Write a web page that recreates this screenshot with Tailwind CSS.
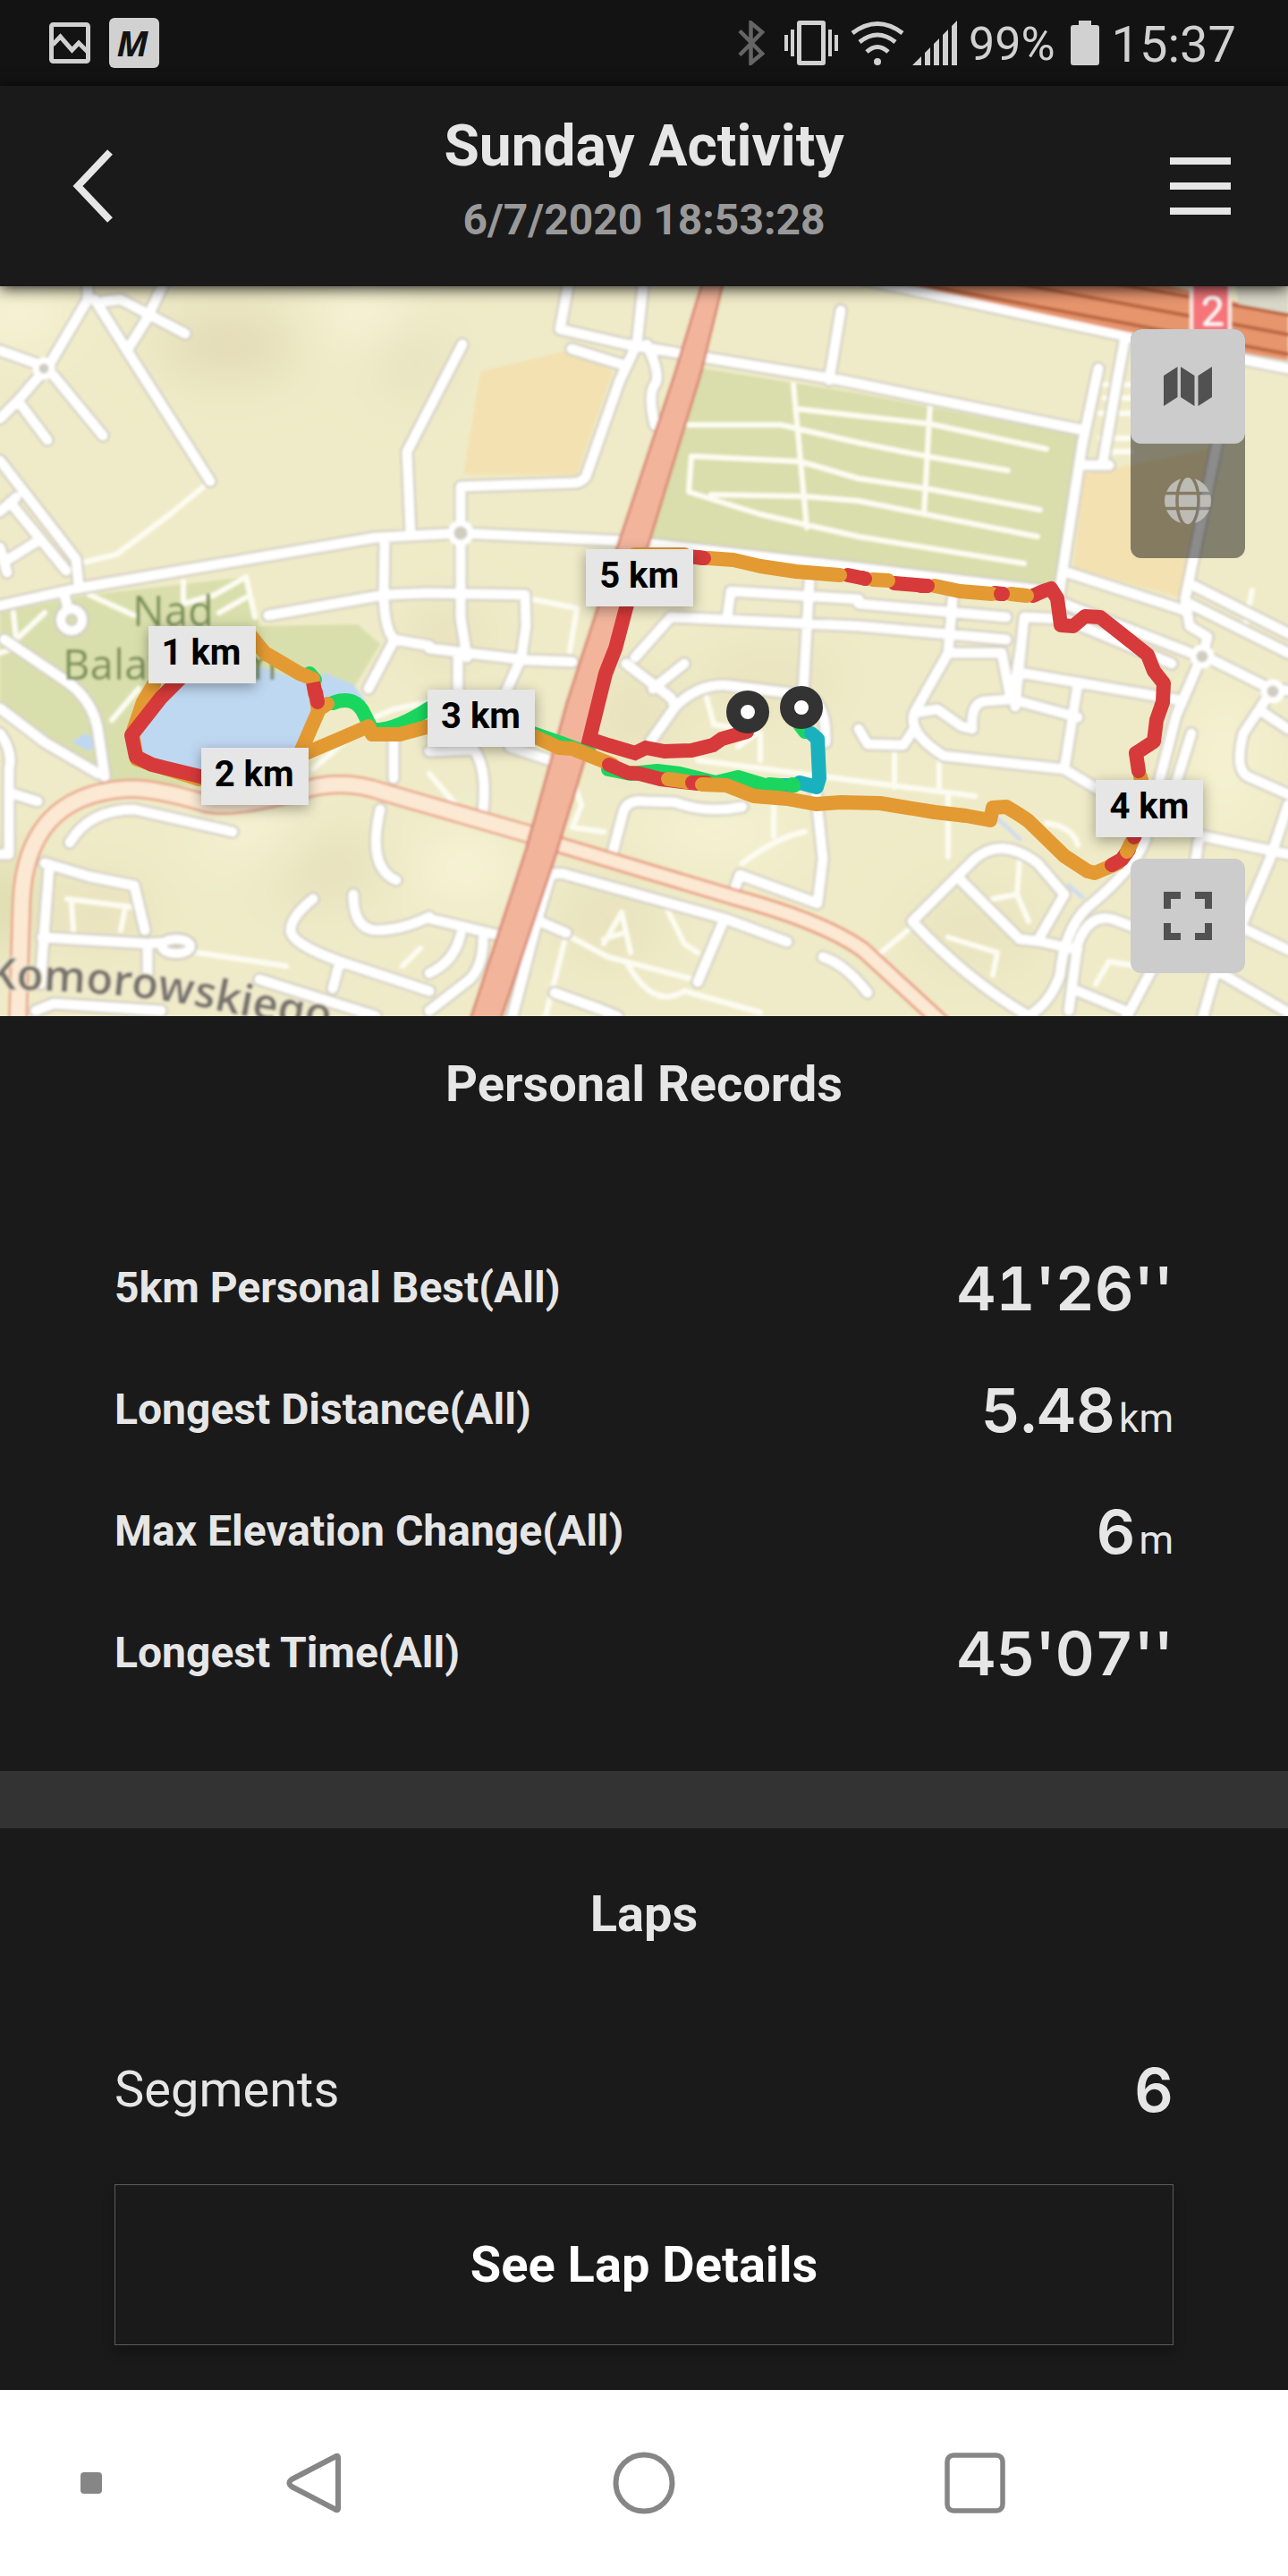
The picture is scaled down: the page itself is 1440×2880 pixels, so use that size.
<!DOCTYPE html>
<html lang="en">
<head>
<meta charset="utf-8">
<meta name="viewport" content="width=device-width, initial-scale=1">
<title>Sunday Activity</title>
<script src="https://cdn.jsdelivr.net/npm/@tailwindcss/browser@4"></script>
</head>
<body class="bg-[#1a1a1a] font-['Roboto',sans-serif] text-[#e6e6e6]">
<div class="flex min-h-screen flex-col">

  <!-- Status bar -->
  <div class="flex h-24 items-center justify-between bg-[#131313] pl-[55px] pr-[58px] text-[#d1d1d1]">
    <div class="flex items-center gap-[21px]">
      <svg class="size-[46px]" viewBox="0 0 46 46" fill="none" stroke="currentColor"><rect x="2.5" y="2.5" width="41" height="41" rx="2" stroke-width="5"/><path d="M4 25 12.500 16 25.500 31 33 23 43 33" stroke-width="5"/></svg>
      <span class="flex size-14 items-center justify-center rounded-md bg-[#d1d1d1] pr-1 font-['Open_Sans',sans-serif] text-[40px] leading-none font-bold italic text-[#131313]">M</span>
    </div>
    <div class="flex items-center">
      <svg class="mr-[22px] h-[50px] w-[30px]" viewBox="0 0 30 50" fill="none" stroke="#656565" stroke-width="4.500"><path d="M2 11.500 27 37 14.500 47.500V2.500L27 13 2 38.500"/></svg>
      <svg class="mr-[14px] h-[50px] w-[60px]" viewBox="0 0 60 50" fill="currentColor"><path fill-rule="evenodd" d="M17 0h26q3 0 3 3v44q0 3-3 3H17q-3 0-3-3V3q0-3 3-3Zm2 5v40h22V5Z"/><path d="M0 16h4v18H0zM7 10h4v30H7zM49 10h4v30h-4zM56 16h4v18h-4z"/></svg>
      <svg class="mr-[9px] h-[50px] w-[60px]" viewBox="0 0 60 50" fill="none" stroke="currentColor" stroke-width="5"><path d="M2 14Q30-7 58 14M10 24Q30 8 50 24M18 35Q30 24 42 35"/><circle cx="30" cy="46" r="4" fill="currentColor" stroke="none"/></svg>
      <svg class="mr-[13px] h-[50px] w-[50px]" viewBox="0 0 50 50" fill="currentColor"><path d="M0 50 10 40v10zM14 36l6-6v20h-6zM24 26l6-6v30h-6zM34 16l6-6v40h-6zM44 6l6-6v50h-6z"/></svg>
      <span class="mr-[17px] pt-1 text-[52px] leading-none">99%</span>
      <svg class="mr-[14px] h-[50px] w-8" viewBox="0 0 32 50" fill="currentColor"><path d="M9 0h14v5h6q3 0 3 3v39q0 3-3 3H3q-3 0-3-3V8q0-3 3-3h6z"/></svg>
      <span class="pt-1 text-[56px] leading-none">15:37</span>
    </div>
  </div>

  <!-- Title bar -->
  <header class="relative z-10 flex h-56 justify-between bg-[#1a1a1a] px-16 shadow-[0_2px_16px_rgba(0,0,0,0.9)]">
    <button type="button" aria-label="Back" class="flex w-[68px] items-center justify-end pr-1.5">
      <svg class="h-[84px] w-12" viewBox="0 0 48 84" fill="none" stroke="#e6e6e6" stroke-width="8"><path d="M45 4 9 42l36 38"/></svg>
    </button>
    <div class="flex flex-col items-center gap-3.5 pt-8 text-center font-bold">
      <h1 class="text-[64px] leading-[72px]">Sunday Activity</h1>
      <p class="text-[48px] leading-[64px] text-[#999]">6/7/2020 18:53:28</p>
    </div>
    <button type="button" aria-label="Menu" class="flex w-[68px] flex-col justify-center gap-5">
      <span class="h-2 bg-[#e6e6e6]"></span><span class="h-2 bg-[#e6e6e6]"></span><span class="h-2 bg-[#e6e6e6]"></span>
    </button>
  </header>

  <!-- Route map -->
  <section aria-label="Route map" class="relative overflow-hidden bg-[#efebc8]">
    <svg class="block w-full" viewBox="0 320 1440 816" fill="none" stroke-linecap="round" stroke-linejoin="round">
      <defs>
        <filter id="soft" x="0" y="0" width="100%" height="100%"><feGaussianBlur stdDeviation="1.6"/></filter>
        <filter id="haze" x="-50%" y="-50%" width="200%" height="200%"><feGaussianBlur stdDeviation="30"/></filter>
        <path id="streets" d="M98 310V335L55 408M0 392 45 408M46 418 20 448 0 468M20 448 53 492M60 420 115 487M106 335 142 392 235 538M116 337 135 335 207 373M186 310 165 355 142 392M0 515 85 625 88 655M0 572 18 556M14 565 74 638M5 628 42 605M0 612 8 640M0 677 85 658 290 623 420 601 515 596 700 605 960 635 1180 662M72 665 76 680M517 385 455 505 459 597M430 605 429 663M300 688 430 665 480 663 587 665 588 700 583 735M637 310 626 368 700 385 940 425 1207 480M720 310 712 385 693 425 655 533Q650 540 640 540L515 544V690L522 735M639 390 697 408M723 385Q740 420 732 430T732 475M940 347 927 425M965 312 1264 377 1440 412M1258 377 1250 420 1233 517M1228 412 1210 497 1187 645 1183 673M1210 520H1240M1193 640 1323 682M1362 490 1325 670 1330 700 1350 712 1344 735M1335 655 1440 708M1330 675 1440 730M1190 675 1344 735M1135 790 1145 690 1190 692 1310 742M960 675 1125 690M960 700 1125 715M1065 670 1060 730M813 690 817 661 960 670M905 650 898 775M710 735 750 690 960 700M700 742 750 780 755 790 728 828M730 770 765 742M755 790Q780 765 810 766L900 777Q925 785 923 830M480 725 590 738 640 740M512 735V778M583 735 565 775M480 840 530 838Q545 860 540 907M570 835 615 850M685 953 697 907Q702 893 722 896L755 897Q790 910 830 902M912 885 920 960 914 1010 827 978 820 998M573 1136 603 1020 615 980Q620 975 630 977L810 1027 880 1053M810 1027 780 1098M603 1030 633 1043M480 1027 555 1045M515 1045Q508 1075 480 1088M540 1050Q540 1080 525 1095L480 1130M620 1110 670 1128 690 1136M920 1070Q945 1078 970 1110M5 715 67 757Q105 780 110 820L117 868M0 792 50 830 110 865M0 820Q15 840 10 860V955H0M10 886 42 896M78 942Q100 905 150 905L260 930M50 965 100 980 150 990 162 1040M55 970 45 1100M47 1048 165 1055 180 1054M165 1055V1090M290 1095 420 1136M40 1130 60 1122 180 1130M425 905Q410 970 443 984M350 1005Q325 1025 325 1040T380 1075L480 1108M395 1000Q395 1040 422 1040T480 1025M380 1075 372 1105M441 715 412 770M429 665Q430 705 441 715L480 722M440 815V870M1060 730 1022 797Q1015 820 1055 845L1190 860 1240 890M1060 730H1120L1130 782 1100 784Q1085 787 1087 815L1075 812 1048 793 1022 797M1022 815 1010 833 970 832 960 815M1142 720 1132 782 1205 802M1140 752 1315 782M1205 765 1190 860M1343 735 1315 800 1297 870 1280 940Q1265 975 1215 1015 1190 1040 1185 1090 1175 1120 1150 1136M1332 820 1315 875M1350 735 1420 770 1440 772M1420 775 1390 820Q1380 860 1395 868L1440 888M1410 795 1440 815M1345 935 1440 955M1440 900 1420 960 1390 1030M1340 940 1335 975M1390 1038 1440 1062M1020 1030 1090 960Q1120 935 1160 965L1190 1000 1160 1052 1140 1050 1070 980M1160 1052 1205 1062M1020 1030Q1080 1095 1150 1136M1195 1130 1205 1055Q1218 1020 1245 1028L1290 1045M1205 1108 1258 1130M1290 1080 1260 1136M1358 1090 1345 1136M1360 1085 1440 1132"/>
        <path id="paths" d="M235 538 190 575 130 620 88 630M0 730 15 725M100 665 150 688M205 650V675L240 665 275 645 285 690M245 685 275 668M15 685 18 715 50 685M595 670 645 680 637 728M1235 430H1270M1235 445H1270M1230 462H1268M1230 490H1266M1230 505H1264M890 457 960 465 1040 474 1170 502M770 475H873L960 495 1035 510 1127 526M773 510 895 516 960 535 1040 547 1163 570M795 553 900 555 960 560 1160 600M773 510 770 550 850 575 960 600 1145 630M887 430 902 590M1040 450 1033 575M125 805 155 770M75 1005 155 1015M80 1010 82 1040M140 1015 135 1040M220 1065 320 1080M640 870 650 900 640 925 675 930M695 1020 675 1055M695 1020 705 1065M675 1050 700 1042M633 1045 680 1070 775 1095M633 1045 610 1136M700 1075Q730 1130 765 1108L850 1132M745 1015 765 1055 780 1065M480 865 510 900M830 965Q870 935 900 930M865 895V935M790 780 798 810 845 818M850 820V850M825 835 845 820M780 850 1090 890M1000 840V880M1050 850V880M1060 890V958M1170 920Q1200 925 1205 945M1140 960 1137 1000 1150 1030M1110 1005 1137 1000M1060 1048 1115 1065 1110 1090M985 1065 1015 1040M1225 1100 1240 1075 1270 1080M450 1080 470 1060M350 860 412 805 440 793 480 785M1400 660 1392 700"/>
      </defs>

      <g filter="url(#soft)">
        <rect y="310" width="1440" height="836" fill="#efebc8"/>
        <!-- terrain shading -->
        <g filter="url(#haze)">
          <ellipse cx="255" cy="385" rx="80" ry="35" fill="#e1d9b4"/><ellipse cx="460" cy="400" rx="35" ry="35" fill="#e2dcb8"/>
          <ellipse cx="410" cy="350" rx="60" ry="30" fill="#f8f5d8"/><ellipse cx="20" cy="350" rx="60" ry="30" fill="#f8f5d8"/>
          <ellipse cx="360" cy="970" rx="70" ry="40" fill="#e6e0bb"/><ellipse cx="280" cy="930" rx="60" ry="30" fill="#f7f4d6"/>
          <ellipse cx="860" cy="760" rx="80" ry="30" fill="#e8e1bc"/><ellipse cx="710" cy="800" rx="40" ry="50" fill="#e6dfba"/>
          <ellipse cx="800" cy="930" rx="90" ry="30" fill="#f6f3d4"/><ellipse cx="520" cy="970" rx="60" ry="40" fill="#f7f4d6"/>
          <ellipse cx="680" cy="1030" rx="60" ry="50" fill="#e8e2bd"/><ellipse cx="500" cy="710" rx="40" ry="30" fill="#e4deb8"/>
          <ellipse cx="1370" cy="850" rx="40" ry="80" fill="#f6f3d2"/><ellipse cx="1090" cy="1040" rx="80" ry="50" fill="#e9e4bf"/>
          <ellipse cx="0" cy="1010" rx="30" ry="60" fill="#d9d8a8"/><ellipse cx="110" cy="1020" rx="60" ry="40" fill="#e7e1bb"/>
        </g>
        <!-- green areas, fields and lake -->
        <path fill="#d9dfac" d="M0 685 100 665 277 645 290 700 400 698 425 720 395 770 110 870 60 840 0 790ZM120 850 240 860 225 880 125 872Z"/>
        <path fill="#d9deac" d="M786 412 960 440 1206 487 1180 655 960 630 722 604Z"/>
        <path fill="#f3e1b1" d="M537 415 635 392 685 415 645 531H518Z"/>
        <path fill="#f3e1b1" d="M1212 530 1360 500 1320 668 1200 635Z"/>
        <path fill="#bfd8f1" d="M150 820 200 762 290 745 348 765 362 752 395 765 410 785 370 790 350 810 330 858 250 870 160 855Z"/>
        <path fill="#bfd8f1" d="M80 830 95 820 110 828 100 840Z"/>
        <path stroke="#d0dcec" stroke-width="5" d="M0 790 50 822M1115 915 1140 938M1195 990 1210 1003M1395 1105 1440 1136"/>
        <!-- minor paths and streets -->
        <use href="#paths" stroke="#fdfcf2" stroke-width="6"/>
        <use href="#streets" stroke="#d3cfc2" stroke-width="16"/>
        <g stroke="#d3cfc2" stroke-width="16"><circle cx="80" cy="693" r="12"/><ellipse cx="197" cy="1058" rx="16" ry="8"/></g>
        <use href="#streets" stroke="#fff" stroke-width="11"/>
        <g stroke="#fff" stroke-width="10"><circle cx="80" cy="693" r="12"/><ellipse cx="197" cy="1058" rx="16" ry="8"/></g>
        <g fill="#cfccc0" stroke="#fff" stroke-width="7"><circle cx="49" cy="412" r="9"/><circle cx="515" cy="596" r="11"/><circle cx="1344" cy="734" r="10"/><circle cx="1423" cy="773" r="10"/></g>
        <!-- secondary road -->
        <path stroke="#e99b80" stroke-width="22" d="M20 1140 24 1010Q28 890 140 882 170 880 230 898 260 905 330 886 380 868 430 886L600 935"/>
        <path stroke="#fbe9d3" stroke-width="17" d="M20 1140 24 1010Q28 890 140 882 170 880 230 898 260 905 330 886 380 868 430 886L600 935"/>
        <path stroke="#e99b80" stroke-width="20" d="M600 937 820 1003Q920 1030 965 1062L1055 1145"/>
        <path stroke="#fbe9d3" stroke-width="14" d="M600 937 820 1003Q920 1030 965 1062L1055 1145"/>
        <!-- primary road -->
        <path fill="#f2b59c" stroke="#d98873" stroke-width="3" d="M787 310 810 310 784 416 724 612 672 790 620 960 558 1145 524 1145 588 950 634 785 690 612 755 416Z"/>
        <!-- trunk road -->
        <path fill="#e7956d" d="M985 312 1264 372 1440 403V352L1280 312Z"/>
        <path stroke="#b9643f" stroke-width="4" d="M1030 318 1440 396M1110 312 1440 374M1220 312 1440 352"/>
        <path fill="#dad8c8" d="M1380 315H1440V350L1385 340Z"/>
        <path fill="#f5747a" stroke="#fbe6e2" stroke-width="4" d="M1332 312h43v60h-43z"/>
        <text x="1343" y="364" font-family="Roboto, sans-serif" font-size="46" fill="#fff">2</text>
        <g font-family="Noto Sans, sans-serif">
          <text x="148" y="700" font-size="47" fill="#7b9158">Nad</text>
          <text x="70" y="760" font-size="47" fill="#7b9158">Balatonem</text>
          <path id="street-name" d="M-14 1106Q140 1108 230 1127T460 1165"/>
          <text font-size="49" font-weight="600" fill="#77736c" stroke="#f3ead2" stroke-width="3" paint-order="stroke"><textPath href="#street-name">Komorowskiego</textPath></text>
        </g>
      </g>

      <!-- pace-coloured route -->
      <g stroke-width="16">
        <path stroke="#1ad65f" d="M346 753 352 760M372 786Q398 776 408 800L416 816Q440 818 480 792M596 820 625 830 660 843M680 860 705 865 735 862 760 865 800 875 825 869 855 878 885 879"/>
        <path stroke="#e39a32" d="M172 765 160 785 148 820 153 849 222 871M366 787 358 792M351 766 356 795 332 850M335 845 382 825 412 812 416 821 447 821 480 812"/>
        <path stroke="#d73a3a" d="M205 755 180 780 147 822 152 846 170 855 232 870"/>
        <path stroke="#e39a32" d="M278 708 296 730 335 753 350 759"/>
        <path stroke="#d73a3a" stroke-linecap="butt" d="M350 763 353 778"/>
        <path stroke="#d73a3a" d="M353 774 355 785"/>
        <path stroke="#e39a32" d="M590 820 625 836 640 837 685 855"/>
        <path stroke="#d73a3a" d="M681 855 702 864 715 865 738 871 780 876"/>
        <path stroke="#e39a32" d="M747 871 768 874"/>
        <path stroke="#d73a3a" d="M774 875H790"/>
        <path stroke="#1ab1bf" d="M872 878H885"/>
        <path stroke="#1ad65f" d="M885 878H888M894 810 900 818"/>
        <path stroke="#1ab1bf" stroke-linejoin="round" d="M894 875 913 880 916 870 914 826 907 820"/>
        <path stroke="#1ad65f" d="M860 877 872 878M886 877 887 878"/>
        <path stroke="#e39a32" d="M785 877 812 878 843 890 880 893 912 899 940 897 984 898 1045 908 1080 912 1107 917 1110 903 1125 902Q1142 912 1150 918L1190 957 1216 974 1224 976 1250 965M1260 953 1275 920M1275 868 1278 880"/>
        <path stroke="#d73a3a" d="M1243 967 1254 961 1262 950"/>
        <path stroke="#e39a32" d="M1260 952 1264 944"/>
        <path stroke="#d73a3a" d="M1268 936 1272 925"/>
        <path stroke="#e39a32" d="M710 620 765 620"/>
        <path stroke="#d73a3a" stroke-linejoin="miter" d="M702 672 688 725 677 753 659 826 680 833 710 842 722 836 743 840 773 839 797 833 807 826 835 818"/>
        <path stroke="#d73a3a" d="M770 622 787 624M948 643 968 647M1000 652 1036 655M1112 663 1121 664M1155 666 1166 661 1175 658 1182 669 1186 699 1200 700 1213 689 1230 690 1283 732 1290 750 1301 764 1300 785 1293 805 1290 829 1270 842 1273 862"/>
        <path stroke="#e39a32" d="M792 624 820 626 850 633 890 639 939 643M976 648 993 649M1045 655 1073 661 1109 664M1130 664 1148 666"/>
        <path stroke="#d73a3a" d="M780 623 787 624M964 646 967 647M1030 655 1037 655M1119 664 1121 664"/>
      </g>
      <g><circle cx="836" cy="796" r="16" fill="#fff" stroke="#333" stroke-width="16"/><circle cx="896" cy="791" r="16" fill="#fff" stroke="#333" stroke-width="16"/></g>
    </svg>

    <!-- kilometre markers -->
    <div class="text-[40px] leading-[60px] font-bold text-black">
      <span class="absolute top-[46.6%] left-[11.5%] h-16 w-[120px] bg-[#e6e6e6] pl-[15px] shadow-[0_4px_14px_rgba(0,0,0,0.35)]">1 km</span>
      <span class="absolute top-[63.2%] left-[15.6%] h-16 w-[120px] bg-[#e6e6e6] pl-[15px] shadow-[0_4px_14px_rgba(0,0,0,0.35)]">2 km</span>
      <span class="absolute top-[55.3%] left-[33.2%] h-16 w-[120px] bg-[#e6e6e6] pl-[15px] shadow-[0_4px_14px_rgba(0,0,0,0.35)]">3 km</span>
      <span class="absolute top-[67.6%] left-[85.1%] h-16 w-[120px] bg-[#e6e6e6] pl-[15px] shadow-[0_4px_14px_rgba(0,0,0,0.35)]">4 km</span>
      <span class="absolute top-[36%] left-[45.5%] h-16 w-[120px] bg-[#e6e6e6] pl-[15px] shadow-[0_4px_14px_rgba(0,0,0,0.35)]">5 km</span>
    </div>

    <!-- map controls -->
    <div class="absolute top-12 right-12 flex flex-col rounded-xl bg-black/45">
      <button type="button" aria-label="Map view" class="flex size-32 items-center justify-center rounded-xl bg-[#ccc]">
        <svg class="h-11 w-[54px]" viewBox="0 0 54 44" fill="#515151"><path d="M0 10 15.500 0v34L0 44zM19 0l15.500 10v34L19 34zM38.500 10 54 0v34l-15.500 10z"/></svg>
      </button>
      <button type="button" aria-label="Satellite view" class="flex size-32 items-center justify-center">
        <svg class="size-[52px]" viewBox="0 0 52 52">
          <defs><mask id="globe-grid"><rect width="52" height="52" fill="#fff"/><g fill="none" stroke="#000" stroke-width="3.500"><ellipse cx="26" cy="26" rx="12" ry="28"/><path d="M0 17.500h52M0 34.500h52"/></g></mask></defs>
          <circle cx="26" cy="26" r="26" fill="#bdbbb5" mask="url(#globe-grid)"/>
        </svg>
      </button>
    </div>
    <button type="button" aria-label="Full screen" class="absolute right-12 bottom-12 flex size-32 items-center justify-center rounded-xl bg-[#ccc]">
      <svg class="size-[54px]" viewBox="0 0 54 54" fill="none" stroke="#515151" stroke-width="8"><path d="M4 19V4h15M35 4h15v15M50 35v15H35M19 50H4V35"/></svg>
    </button>
  </section>

  <!-- Personal records -->
  <section class="px-32 pt-10 pb-16">
    <h2 class="text-center text-[56px] leading-[72px] font-bold">Personal Records</h2>
    <dl class="mt-[124px]">
      <div class="flex h-[136px] items-center justify-between">
        <dt class="text-[48px] font-bold">5km Personal Best(All)</dt>
        <dd class="font-['Inter',sans-serif] text-[68px] leading-none font-semibold tabular-nums">41'26''</dd>
      </div>
      <div class="flex h-[136px] items-center justify-between">
        <dt class="text-[48px] font-bold">Longest Distance(All)</dt>
        <dd class="font-['Inter',sans-serif] text-[68px] leading-none font-semibold tabular-nums">5.48<span class="ml-1 font-['Roboto',sans-serif] text-[44px] leading-none font-normal">km</span></dd>
      </div>
      <div class="flex h-[136px] items-center justify-between">
        <dt class="text-[48px] font-bold">Max Elevation Change(All)</dt>
        <dd class="font-['Inter',sans-serif] text-[68px] leading-none font-semibold tabular-nums">6<span class="ml-1 font-['Roboto',sans-serif] text-[44px] leading-none font-normal">m</span></dd>
      </div>
      <div class="flex h-[136px] items-center justify-between">
        <dt class="text-[48px] font-bold">Longest Time(All)</dt>
        <dd class="font-['Inter',sans-serif] text-[68px] leading-none font-semibold tabular-nums">45'07''</dd>
      </div>
    </dl>
  </section>

  <div class="h-16 bg-[#333]"></div>

  <!-- Laps -->
  <section class="px-32 pt-[60px] pb-[50px]">
    <h2 class="text-center text-[56px] leading-[72px] font-bold">Laps</h2>
    <dl class="mt-[92px] flex h-[136px] items-center justify-between">
      <dt class="text-[56px]">Segments</dt>
      <dd class="font-['Inter',sans-serif] text-[68px] leading-none font-semibold tabular-nums">6</dd>
    </dl>
    <button type="button" class="mt-[38px] h-[180px] w-full border border-[#5c5c5c] text-[56px] font-bold text-white shadow-[0_8px_12px_rgba(0,0,0,0.25)]">See Lap Details</button>
  </section>

  <!-- System navigation -->
  <nav aria-label="System" class="grid h-52 grid-cols-[165fr_370fr_370fr_370fr_165fr] items-center justify-items-center bg-white">
    <span class="mr-auto ml-[90px] size-6 rounded bg-[#868686]"></span>
    <button type="button" aria-label="Back"><svg class="size-[72px]" viewBox="0 0 72 72" fill="none" stroke="#868686" stroke-width="6" stroke-linejoin="round"><path d="M64 8v56q0 4-4 1L12 40q-5-4 0-8L60 7q4-3 4 1Z"/></svg></button>
    <button type="button" aria-label="Home"><svg class="size-[72px]" viewBox="0 0 72 72" fill="none" stroke="#868686" stroke-width="6"><circle cx="36" cy="36" r="31.500"/></svg></button>
    <button type="button" aria-label="Recent apps"><svg class="size-[72px]" viewBox="0 0 72 72" fill="none" stroke="#868686" stroke-width="5.500"><rect x="5" y="5" width="62" height="62" rx="7"/></svg></button>
  </nav>
</div>
</body>
</html>
